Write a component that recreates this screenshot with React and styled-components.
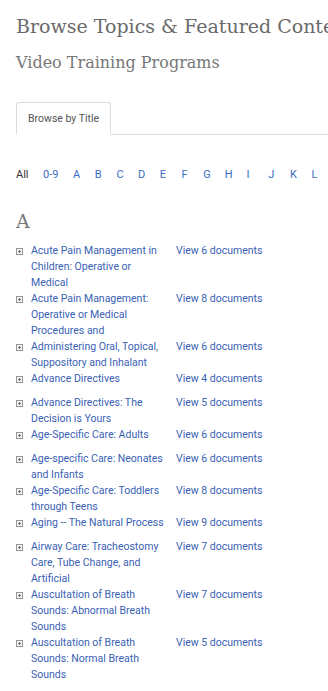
import React from 'react';
import styled, { createGlobalStyle } from 'styled-components';

const GlobalStyle = createGlobalStyle`
  body {
    margin: 0;
    background: #fff;
    overflow-x: hidden;
    font-family: Roboto, "Liberation Sans", sans-serif;
  }
`;

const Page = styled.div`
  padding: 12px 0 0 16px;
`;

const Title = styled.h1`
  margin: 0;
  font-family: "DejaVu Serif", serif;
  font-weight: 400;
  font-size: 19px;
  line-height: 28px;
  color: #6a6a6a;
  white-space: nowrap;
`;

const Subtitle = styled.h2`
  margin: 11px 0 0 0;
  font-family: "DejaVu Serif", serif;
  font-weight: 400;
  font-size: 16px;
  line-height: 24px;
  color: #777;
  white-space: nowrap;
`;

const TabBar = styled.div`
  display: flex;
  margin-top: 27px;
  border-bottom: 1px solid #ddd;
`;

const Tab = styled.div`
  padding: 0 11px;
  height: 31px;
  display: flex;
  align-items: center;
  margin-bottom: -1px;
  border: 1px solid #ddd;
  border-bottom-color: #fff;
  border-radius: 3px 3px 0 0;
  background: #fff;
  font-size: 10.5px;
  color: #555;
`;

const Letters = styled.div`
  display: flex;
  margin-top: 33px;
  font-size: 11px;
  line-height: 14px;
  white-space: nowrap;
`;

const Letter = styled.span`
  width: ${(p) => p.w || 21.7}px;
  flex-shrink: 0;
  color: ${(p) => (p.active ? '#333' : '#3a6cc2')};
`;

const Section = styled.h3`
  margin: 28px 0 0 0;
  font-family: "DejaVu Serif", serif;
  font-weight: 300;
  font-size: 19px;
  line-height: 22px;
  color: #777;
`;

const List = styled.div`
  margin-top: 11px;
`;

const Row = styled.div`
  display: flex;
  min-height: 24px;
  font-size: 10.5px;
  line-height: 16px;
`;

const Toggle = styled.span`
  width: 15px;
  flex-shrink: 0;
  padding-top: 5px;
  & svg {
    display: block;
  }
`;

const Name = styled.a`
  width: 145px;
  flex-shrink: 0;
  padding-right: 6px;
  box-sizing: border-box;
  color: #3a5fb4;
  text-decoration: none;
`;

const Docs = styled.a`
  color: #3a5fb4;
  text-decoration: none;
  white-space: nowrap;
`;

const PlusBox = () => (
  <svg width="7" height="7" viewBox="0 0 7 7">
    <rect x="0.5" y="0.5" width="6" height="6" fill="#f2f2f2" stroke="#999" />
    <path d="M2 3.5h3M3.5 2v3" stroke="#777" />
  </svg>
);

const letters = ['A', 'B', 'C', 'D', 'E', 'F', 'G', 'H', 'I', 'J', 'K', 'L'];

const topics = [
  ['Acute Pain Management in Children: Operative or Medical', 6],
  ['Acute Pain Management: Operative or Medical Procedures and', 8],
  ['Administering Oral, Topical, Suppository and Inhalant', 6],
  ['Advance Directives', 4],
  ['Advance Directives: The Decision is Yours', 5],
  ['Age-Specific Care: Adults', 6],
  ['Age-specific Care: Neonates and Infants', 6],
  ['Age-Specific Care: Toddlers through Teens', 8],
  ['Aging -- The Natural Process', 9],
  ['Airway Care: Tracheostomy Care, Tube Change, and Artificial', 7],
  ['Auscultation of Breath Sounds: Abnormal Breath Sounds', 7],
  ['Auscultation of Breath Sounds: Normal Breath Sounds', 5],
];

const App = () => {
  return (
    <Page>
      <GlobalStyle />
      <Title>Browse Topics &amp; Featured Content</Title>
      <Subtitle>Video Training Programs</Subtitle>
      <TabBar>
        <Tab>Browse by Title</Tab>
      </TabBar>
      <Letters>
        <Letter active w={27}>All</Letter>
        <Letter w={30}>0-9</Letter>
        {letters.map((l) => (
          <Letter key={l}>{l}</Letter>
        ))}
      </Letters>
      <Section>A</Section>
      <List>
        {topics.map(([name, count]) => (
          <Row key={name}>
            <Toggle>
              <PlusBox />
            </Toggle>
            <Name href="#">{name}</Name>
            <Docs href="#">View {count} documents</Docs>
          </Row>
        ))}
      </List>
    </Page>
  );
};

export default App;
